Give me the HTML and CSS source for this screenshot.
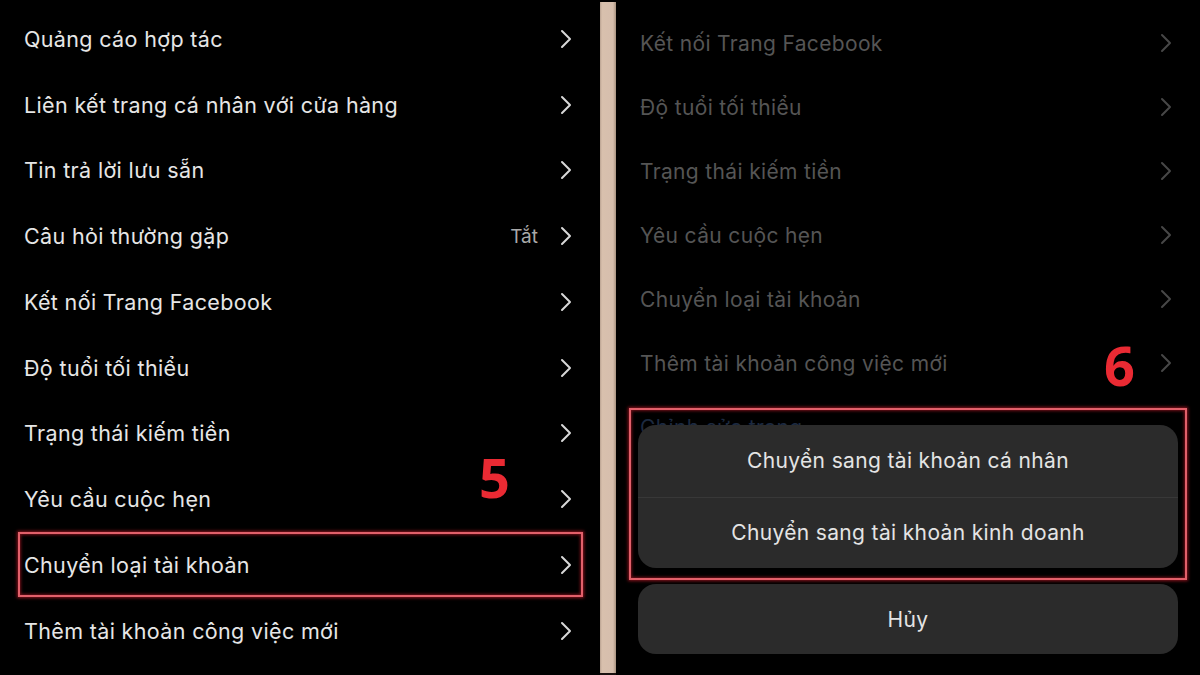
FILE: index.html
```html
<!DOCTYPE html>
<html lang="vi">
<head>
<meta charset="utf-8">
<title>Chuyển loại tài khoản</title>
<link rel="stylesheet" href="styles.css">
</head>
<body>
<div class="screen">
  <section class="panel panel-left">
    <ul class="list">
      <li class="row"><span class="label">Quảng cáo hợp tác</span><span class="end"><svg class="chev" viewBox="0 0 12 20"><path d="M2 2 L10 10 L2 18"/></svg></span></li>
      <li class="row"><span class="label">Liên kết trang cá nhân với cửa hàng</span><span class="end"><svg class="chev" viewBox="0 0 12 20"><path d="M2 2 L10 10 L2 18"/></svg></span></li>
      <li class="row"><span class="label">Tin trả lời lưu sẵn</span><span class="end"><svg class="chev" viewBox="0 0 12 20"><path d="M2 2 L10 10 L2 18"/></svg></span></li>
      <li class="row"><span class="label">Câu hỏi thường gặp</span><span class="end"><span class="value">Tắt</span><svg class="chev" viewBox="0 0 12 20"><path d="M2 2 L10 10 L2 18"/></svg></span></li>
      <li class="row"><span class="label">Kết nối Trang Facebook</span><span class="end"><svg class="chev" viewBox="0 0 12 20"><path d="M2 2 L10 10 L2 18"/></svg></span></li>
      <li class="row"><span class="label">Độ tuổi tối thiểu</span><span class="end"><svg class="chev" viewBox="0 0 12 20"><path d="M2 2 L10 10 L2 18"/></svg></span></li>
      <li class="row"><span class="label">Trạng thái kiếm tiền</span><span class="end"><svg class="chev" viewBox="0 0 12 20"><path d="M2 2 L10 10 L2 18"/></svg></span></li>
      <li class="row"><span class="label">Yêu cầu cuộc hẹn</span><span class="end"><svg class="chev" viewBox="0 0 12 20"><path d="M2 2 L10 10 L2 18"/></svg></span></li>
      <li class="row row-marked"><span class="label">Chuyển loại tài khoản</span><span class="end"><svg class="chev" viewBox="0 0 12 20"><path d="M2 2 L10 10 L2 18"/></svg></span></li>
      <li class="row"><span class="label">Thêm tài khoản công việc mới</span><span class="end"><svg class="chev" viewBox="0 0 12 20"><path d="M2 2 L10 10 L2 18"/></svg></span></li>
    </ul>
    <span class="step step-5">5</span>
  </section>

  <div class="divider"></div>

  <section class="panel panel-right">
    <ul class="list list-dim">
      <li class="row"><span class="label">Kết nối Trang Facebook</span><span class="end"><svg class="chev" viewBox="0 0 12 20"><path d="M2 2 L10 10 L2 18"/></svg></span></li>
      <li class="row"><span class="label">Độ tuổi tối thiểu</span><span class="end"><svg class="chev" viewBox="0 0 12 20"><path d="M2 2 L10 10 L2 18"/></svg></span></li>
      <li class="row"><span class="label">Trạng thái kiếm tiền</span><span class="end"><svg class="chev" viewBox="0 0 12 20"><path d="M2 2 L10 10 L2 18"/></svg></span></li>
      <li class="row"><span class="label">Yêu cầu cuộc hẹn</span><span class="end"><svg class="chev" viewBox="0 0 12 20"><path d="M2 2 L10 10 L2 18"/></svg></span></li>
      <li class="row"><span class="label">Chuyển loại tài khoản</span><span class="end"><svg class="chev" viewBox="0 0 12 20"><path d="M2 2 L10 10 L2 18"/></svg></span></li>
      <li class="row"><span class="label">Thêm tài khoản công việc mới</span><span class="end"><svg class="chev" viewBox="0 0 12 20"><path d="M2 2 L10 10 L2 18"/></svg></span></li>
      <li class="row"><span class="label link">Chỉnh sửa trang</span></li>
    </ul>

    <div class="sheet">
      <div class="sheet-group">
        <div class="sheet-btn">Chuyển sang tài khoản cá nhân</div>
        <div class="sheet-btn">Chuyển sang tài khoản kinh doanh</div>
      </div>
      <div class="sheet-group sheet-cancel">
        <div class="sheet-btn">Hủy</div>
      </div>
    </div>
    <div class="mark-box"></div>
    <span class="step step-6">6</span>
  </section>
</div>
</body>
</html>
```

FILE: styles.css
```css
* { box-sizing: border-box; }

html, body {
  margin: 0;
  padding: 0;
  background: #000;
}

body {
  font-family: Inter, "Noto Sans", "Liberation Sans", sans-serif;
  -webkit-font-smoothing: antialiased;
}

.screen {
  display: flex;
  width: 1200px;
  height: 675px;
  overflow: hidden;
  background: #000;
}

.panel {
  position: relative;
  height: 100%;
  background: #000;
}

.panel-left {
  width: 600px;
  padding-top: 6px;
}

.divider {
  width: 16px;
  height: 100%;
  background: linear-gradient(90deg, #b9a291 0, #d8c0ad 2px, #d6bead 13px, #a8927f 16px);
  border-top: 2px solid #000;
  border-bottom: 2px solid #1a1210;
}

.panel-right {
  flex: 1;
  padding-top: 11px;
}

.list {
  list-style: none;
  margin: 0;
  padding: 0;
}

.row {
  position: relative;
  display: flex;
  align-items: center;
  justify-content: space-between;
  height: 65.75px;
  padding: 0 28px 0 24px;
  color: #e6e6e6;
  font-size: 21.5px;
  letter-spacing: 0.35px;
}

.end {
  display: flex;
  align-items: center;
  gap: 22px;
}

.value {
  color: #a9a9a9;
  font-size: 19px;
  letter-spacing: 0;
}

.chev {
  width: 12px;
  height: 20px;
  display: block;
}

.chev path {
  fill: none;
  stroke: #d8d8d8;
  stroke-width: 2;
  stroke-linecap: round;
  stroke-linejoin: round;
}

.row-marked::after {
  content: "";
  position: absolute;
  left: 18px;
  right: 17px;
  top: 0;
  bottom: 1px;
  border: 2px solid #e2606a;
  box-shadow: 0 0 3px 1px rgba(210, 30, 45, 0.65), inset 0 0 3px 1px rgba(210, 30, 45, 0.55);
}

.list-dim .row {
  height: 64px;
  color: #555;
  font-size: 21px;
  letter-spacing: 0.35px;
}

.list-dim .chev path {
  stroke: #474747;
}

.label.link {
  color: #1d2a40;
}

.step {
  position: absolute;
  color: #ea2a33;
  font-family: "Open Sans", "Noto Sans", sans-serif;
  font-weight: 700;
  font-size: 54px;
  line-height: 1;
}

.step-5 {
  left: 479px;
  top: 450px;
}

.step-6 {
  left: 488px;
  top: 338px;
}

.sheet {
  position: absolute;
  left: 22px;
  right: 22px;
  bottom: 21px;
  display: flex;
  flex-direction: column;
  gap: 16px;
}

.sheet-group {
  background: #2b2b2b;
  border-radius: 18px;
  overflow: hidden;
}

.sheet-btn {
  height: 71.5px;
  display: flex;
  align-items: center;
  justify-content: center;
  color: #e4e4e4;
  font-size: 21px;
  letter-spacing: 0.35px;
}

.sheet-btn + .sheet-btn {
  border-top: 1px solid #383838;
}

.sheet-cancel .sheet-btn {
  height: 70px;
}

.mark-box {
  position: absolute;
  left: 13px;
  right: 13px;
  top: 408px;
  height: 172px;
  border: 2px solid #e2606a;
  box-shadow: 0 0 3px 1px rgba(210, 30, 45, 0.65), inset 0 0 3px 1px rgba(210, 30, 45, 0.55);
  pointer-events: none;
}
```
